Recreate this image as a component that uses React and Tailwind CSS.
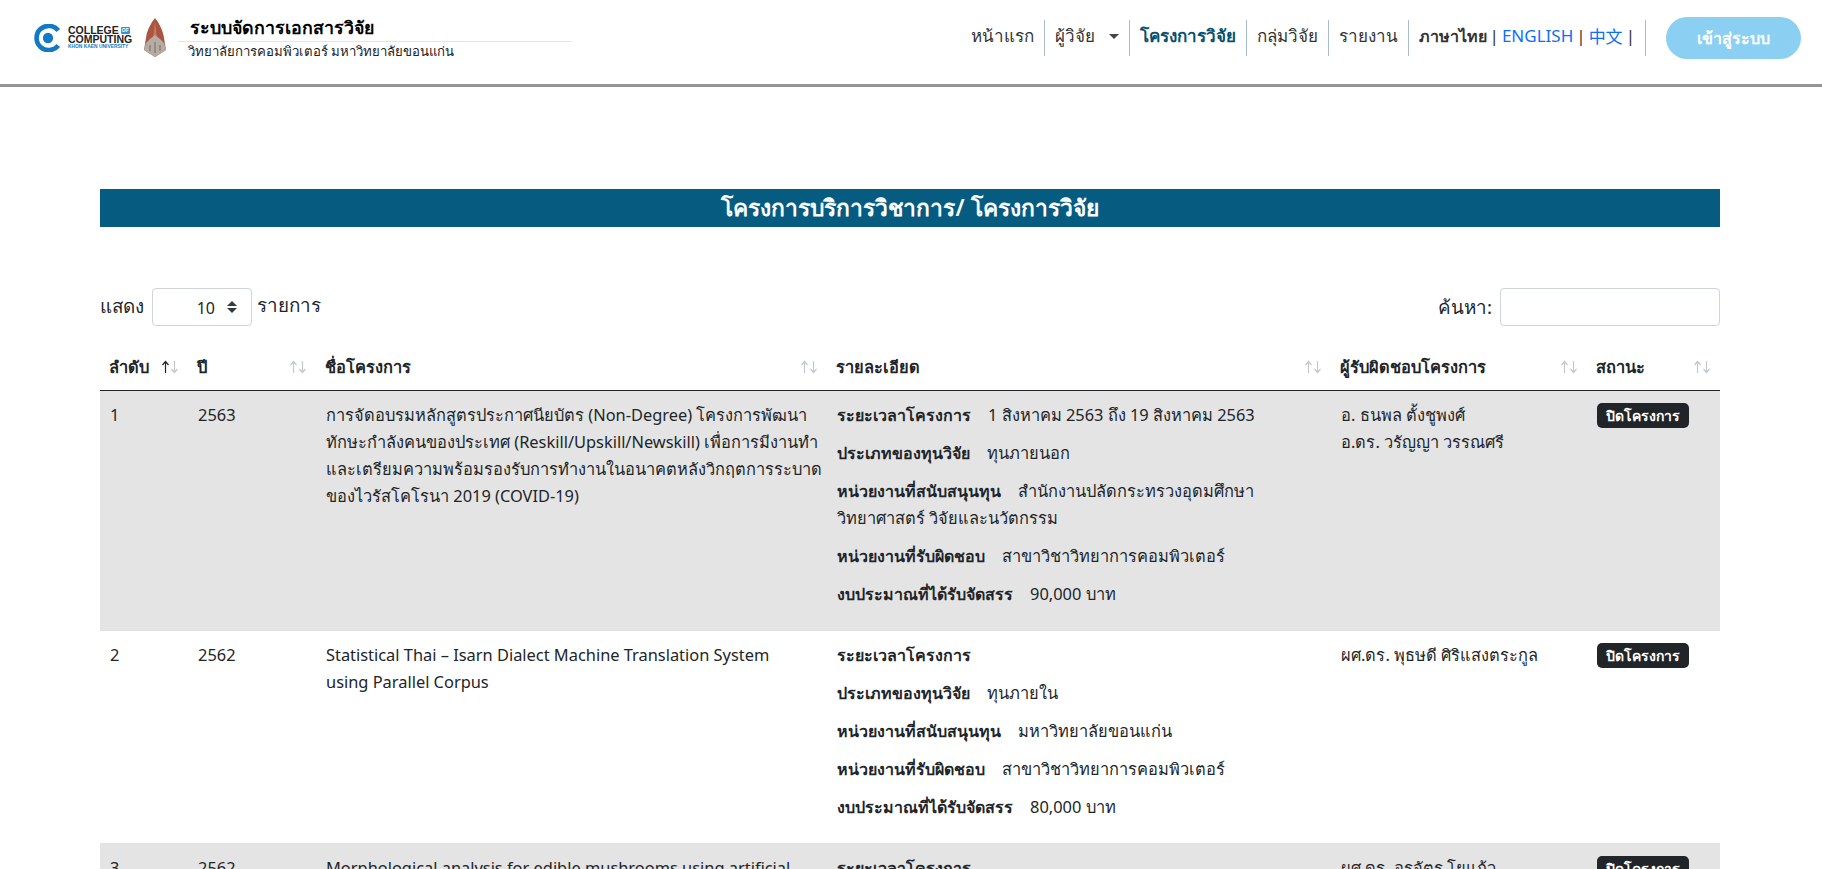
const rows = [
  {
    no: "1",
    year: "2563",
    title: [
      "การจัดอบรมหลักสูตรประกาศนียบัตร (Non-Degree) โครงการพัฒนา",
      "ทักษะกำลังคนของประเทศ (Reskill/Upskill/Newskill) เพื่อการมีงานทำ",
      "และเตรียมความพร้อมรองรับการทำงานในอนาคตหลังวิกฤตการระบาด",
      "ของไวรัสโคโรนา 2019 (COVID-19)",
    ],
    period: "1 สิงหาคม 2563 ถึง 19 สิงหาคม 2563",
    type: "ทุนภายนอก",
    funder: "สำนักงานปลัดกระทรวงอุดมศึกษา วิทยาศาสตร์ วิจัยและนวัตกรรม",
    owner: "สาขาวิชาวิทยาการคอมพิวเตอร์",
    budget: "90,000 บาท",
    people: ["อ. ธนพล ตั้งชูพงศ์", "อ.ดร. วรัญญา วรรณศรี"],
  },
  {
    no: "2",
    year: "2562",
    title: ["Statistical Thai – Isarn Dialect Machine Translation System", "using Parallel Corpus"],
    period: "",
    type: "ทุนภายใน",
    funder: "มหาวิทยาลัยขอนแก่น",
    owner: "สาขาวิชาวิทยาการคอมพิวเตอร์",
    budget: "80,000 บาท",
    people: ["ผศ.ดร. พุธษดี ศิริแสงตระกูล"],
  },
  {
    no: "3",
    year: "2562",
    title: ["Morphological analysis for edible mushrooms using artificial", "intelligence"],
    period: "",
    type: "ทุนภายใน",
    funder: "มหาวิทยาลัยขอนแก่น",
    owner: "สาขาวิชาวิทยาการคอมพิวเตอร์",
    budget: "80,000 บาท",
    people: ["ผศ.ดร. อรจัตร โยแก้ว"],
  },
];

function SortIcon({ active }) {
  return (
    <svg width="18" height="14" viewBox="0 0 18 14" fill="none" strokeWidth="1.2">
      <path d="M4.5 13V2M1.5 5L4.5 1.5L7.5 5" stroke={active ? "#212529" : "#c4c8cc"} />
      <path d="M13.5 1V12M10.5 9L13.5 12.5L16.5 9" stroke="#c4c8cc" />
    </svg>
  );
}

function Detail({ label, value }) {
  return (
    <p className="mb-[11px] text-[16.4px] leading-[27px]">
      <b className="mr-[17px] text-[16px] font-semibold leading-none">{label}</b>
      {value}
    </p>
  );
}

function Logo() {
  return (
    <div className="flex items-center">
      <svg width="28" height="28" viewBox="0 0 30 30">
        <path d="M26 7 A13 13 0 1 0 26 23" fill="none" stroke="#1479c4" strokeWidth="5" />
        <circle cx="15" cy="15" r="5.5" fill="#1479c4" />
      </svg>
      <div className="ml-[6px] w-[66px] font-['Liberation_Sans',sans-serif] font-bold text-[#222]">
        <div className="flex items-center text-[10.5px] leading-[9px]">
          COLLEGE
          <span className="ml-[2px] h-[7px] rounded-[1px] bg-[#3a8fd0] px-[1px] text-[5px] leading-[7px] text-white">OF</span>
        </div>
        <div className="text-[10.5px] leading-[9px]">COMPUTING</div>
        <div className="whitespace-nowrap text-[4.9px] leading-[6px] text-[#1479c4]">KHON KAEN UNIVERSITY</div>
      </div>
      <svg className="ml-[9px]" width="24" height="40" viewBox="0 0 24 40">
        <path d="M12 0 C16 5 20 12 21 20 L23 32 L12 39 L1 32 L3 20 C4 12 8 5 12 0 Z" fill="#a9553f" />
        <path d="M12 4 L14 20 H10 Z" fill="#c47a5e" />
        <path d="M3 25 L7 21 L12 17 L17 21 L21 25 L23 32 L12 39 L1 32 Z" fill="#b5aca4" />
        <path d="M7 27 V33 M12 24 V35 M17 27 V33" stroke="#8d8178" strokeWidth="1.5" />
      </svg>
    </div>
  );
}

const navLink = "flex h-[36px] items-center border-r border-[#a9bccb] px-[10px] pb-[3px]";

export default function App() {
  return (
    <div className="min-h-screen bg-white font-['Noto_Sans',sans-serif] text-[16.4px] font-normal text-[#212529]">
      <header className="flex h-[87px] items-center border-b-[3px] border-[#949494] pb-[9px] pl-[34px] pr-[21px]">
        <Logo />
        <div className="ml-[11px] w-[394px]">
          <div className="border-b border-[#e5e5e5] pb-[2px] pl-[12px] text-[17.8px] font-semibold leading-[24px] text-black">
            ระบบจัดการเอกสารวิจัย
          </div>
          <div className="pl-[10px] text-[13.2px] font-normal leading-[18px] text-[#222]">
            วิทยาลัยการคอมพิวเตอร์ มหาวิทยาลัยขอนแก่น
          </div>
        </div>
        <nav className="ml-auto flex items-center text-[17px] text-[#333]">
          <a className={navLink}>หน้าแรก</a>
          <a className={navLink}>
            ผู้วิจัย
            <span className="ml-[14px] h-0 w-0 border-x-[5px] border-t-[5px] border-x-transparent border-t-[#444]" />
          </a>
          <a className={`${navLink} font-semibold text-[#05506f]`}>โครงการวิจัย</a>
          <a className={navLink}>กลุ่มวิจัย</a>
          <a className={navLink}>รายงาน</a>
          <div className="flex h-[36px] items-center gap-[3px] border-r border-[#a9bccb] pb-[3px] pl-[10px] pr-[10px]">
            <b className="text-[16px] font-bold text-[#333]">ภาษาไทย</b>
            <span>|</span>
            <a className="text-[#0d6efd]">ENGLISH</a>
            <span>|</span>
            <a className="font-['Noto_Sans_CJK_SC',sans-serif] text-[#0d6efd]">中文</a>
            <span>|</span>
          </div>
          <button className="ml-[20px] h-[42px] w-[135px] rounded-[21px] bg-[#8bd0f2] text-[16px] font-bold text-white">
            เข้าสู่ระบบ
          </button>
        </nav>
      </header>

      <main className="pl-[100px] pr-[102px] pt-[102px]">
        <h1 className="h-[38px] bg-[#055c80] text-center text-[22.8px] font-semibold leading-[38px] text-white">
          โครงการบริการวิชาการ/ โครงการวิจัย
        </h1>

        <div className="mt-[61px] flex items-start justify-between text-[18.8px]">
          <div className="flex items-center">
            <span className="mb-[2px]">แสดง</span>
            <div className="ml-[8px] flex h-[38px] w-[100px] items-center justify-end rounded-[4px] border border-[#ced4da] pr-[14px] text-[16px]">
              <span className="mr-[12px] mt-[2px]">10</span>
              <span className="flex flex-col gap-[2px]">
                <span className="h-0 w-0 border-x-[5px] border-b-[5px] border-x-transparent border-b-[#343a40]" />
                <span className="h-0 w-0 border-x-[5px] border-t-[5px] border-x-transparent border-t-[#343a40]" />
              </span>
            </div>
            <span className="ml-[5px] mb-[4px]">รายการ</span>
          </div>
          <div className="flex items-center">
            <span>ค้นหา:</span>
            <div className="ml-[8px] h-[38px] w-[220px] rounded-[4px] border border-[#ced4da]" />
          </div>
        </div>

        <table className="mt-[17px] w-full table-fixed border-collapse">
          <colgroup>
            <col className="w-[88px]" />
            <col className="w-[128px]" />
            <col className="w-[511px]" />
            <col className="w-[504px]" />
            <col className="w-[256px]" />
            <col className="w-[133px]" />
          </colgroup>
          <thead>
            <tr className="border-b border-[#212529] text-left">
              {["ลำดับ", "ปี", "ชื่อโครงการ", "รายละเอียด", "ผู้รับผิดชอบโครงการ", "สถานะ"].map((h, i) => (
                <th key={h} className="h-[47px] px-[9px] pt-[2px] font-semibold">
                  <div className="flex items-center justify-between">
                    {h}
                    <SortIcon active={i === 0} />
                  </div>
                </th>
              ))}
            </tr>
          </thead>
          <tbody>
            {rows.map((r, i) => (
              <tr key={r.no} className={`border-b border-[#dee2e6] align-top ${i % 2 === 0 ? "bg-[#e4e4e4]" : "bg-white"}`}>
                <td className="px-[10px] pt-[10px] leading-[27px]">{r.no}</td>
                <td className="px-[10px] pt-[10px] leading-[27px]">{r.year}</td>
                <td className="px-[10px] pt-[10px] leading-[27px]">
                  {r.title.map((line) => (
                    <div key={line} className="whitespace-nowrap">{line}</div>
                  ))}
                </td>
                <td className="px-[10px] pb-[12px] pt-[10px]">
                  <Detail label="ระยะเวลาโครงการ" value={r.period} />
                  <Detail label="ประเภทของทุนวิจัย" value={r.type} />
                  <Detail label="หน่วยงานที่สนับสนุนทุน" value={r.funder} />
                  <Detail label="หน่วยงานที่รับผิดชอบ" value={r.owner} />
                  <Detail label="งบประมาณที่ได้รับจัดสรร" value={r.budget} />
                </td>
                <td className="px-[10px] pt-[10px] leading-[27px]">
                  {r.people.map((p) => (
                    <div key={p}>{p}</div>
                  ))}
                </td>
                <td className="px-[10px] pt-[12px]">
                  <span className="inline-block rounded-[5px] bg-[#212529] px-[9px] py-[2px] text-[14px] font-bold leading-[21px] text-white">
                    ปิดโครงการ
                  </span>
                </td>
              </tr>
            ))}
          </tbody>
        </table>
      </main>
    </div>
  );
}
